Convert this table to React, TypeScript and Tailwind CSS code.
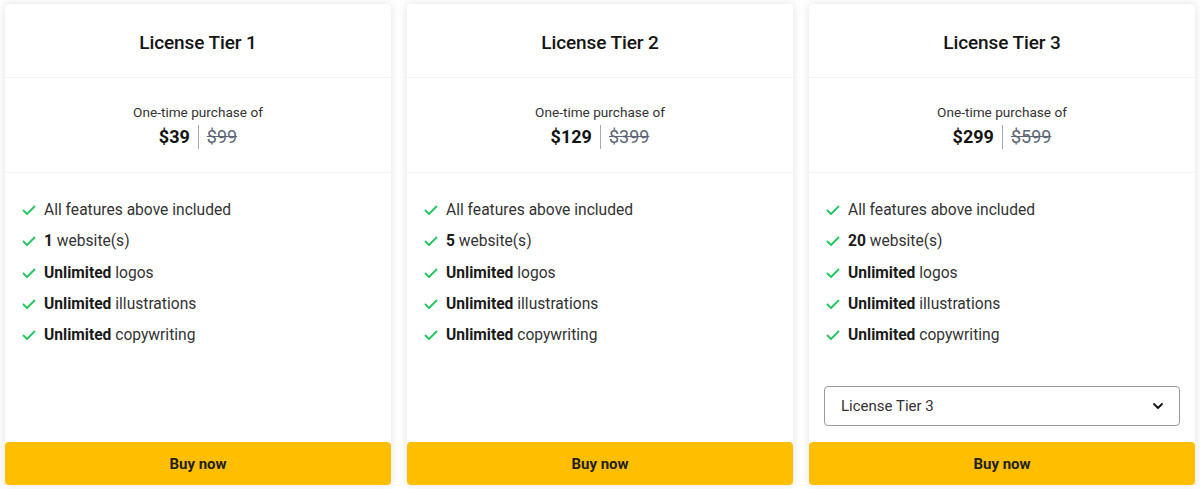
import React from "react";

type Tier = { name: string; price: string; old: string; sites: string; select?: boolean };

const tiers: Tier[] = [
  { name: "License Tier 1", price: "$39", old: "$99", sites: "1" },
  { name: "License Tier 2", price: "$129", old: "$399", sites: "5" },
  { name: "License Tier 3", price: "$299", old: "$599", sites: "20", select: true },
];

function Check() {
  return (
    <svg width="16" height="16" viewBox="0 0 16 16" fill="none" className="shrink-0">
      <path d="M2.5 8.5 L6 12 L13.5 4.5" stroke="#22c55e" strokeWidth="1.8" strokeLinecap="round" strokeLinejoin="round" />
    </svg>
  );
}

function Card({ t }: { t: Tier }) {
  const features: React.ReactNode[] = [
    <>All features above included</>,
    <><b className="font-bold text-[#1a1a1a]">{t.sites}</b> website(s)</>,
    <><b className="font-bold text-[#1a1a1a]">Unlimited</b> logos</>,
    <><b className="font-bold text-[#1a1a1a]">Unlimited</b> illustrations</>,
    <><b className="font-bold text-[#1a1a1a]">Unlimited</b> copywriting</>,
  ];
  return (
    <div className="flex flex-1 flex-col rounded-[4px] bg-white shadow-[0_0_10px_rgba(0,0,0,0.12)]">
      <div className="flex h-[74px] items-center justify-center border-b border-[#f3f3f3] pt-[5px]">
        <h2 className="text-[19px] font-medium tracking-[-0.1px] text-[#141414]">{t.name}</h2>
      </div>
      <div className="flex h-[95px] flex-col items-center justify-center border-b border-[#f3f3f3] pt-[2px]">
        <div className="text-[13.6px] leading-[17px] text-[#333]">One-time purchase of</div>
        <div className="mt-[4px] flex items-center text-[18px] leading-[22px]">
          <span className="font-bold text-[#141414]">{t.price}</span>
          <span className="mx-[8px] h-[24px] w-px bg-[#aaa]" />
          <span className="text-[#5d6675] line-through">{t.old}</span>
        </div>
      </div>
      <ul className="flex flex-col gap-[11.3px] px-[16px] pt-[27px]">
        {features.map((f, i) => (
          <li key={i} className="flex items-center gap-[7px] text-[15.6px] leading-[20px] text-[#333]">
            <Check />
            <span>{f}</span>
          </li>
        ))}
      </ul>
      <div className="flex-1" />
      {t.select && (
        <div className="mx-[15px] mb-[16px] flex h-[40px] items-center justify-between rounded-[4px] border border-[#9a9a9a] pl-[16px] pr-[14px] text-[15px] text-[#333]">
          <span>License Tier 3</span>
          <svg width="14" height="14" viewBox="0 0 14 14" fill="none">
            <path d="M3 5 L7 9 L11 5" stroke="#111" strokeWidth="1.8" strokeLinecap="round" strokeLinejoin="round" />
          </svg>
        </div>
      )}
      <button className="flex h-[43px] items-center justify-center rounded-[4px] bg-[#ffbe00] pt-[2px] text-[15px] font-bold text-[#1f1f1f]">
        Buy now
      </button>
    </div>
  );
}

export default function App() {
  return (
    <div className="h-[489px] w-[1200px] bg-white pt-[4px] pb-[4px] px-[5px]" style={{ fontFamily: "Roboto, 'Liberation Sans', sans-serif" }}>
      <div className="flex h-[481px] gap-[16px]">
        {tiers.map((t) => (
          <Card key={t.name} t={t} />
        ))}
      </div>
    </div>
  );
}
